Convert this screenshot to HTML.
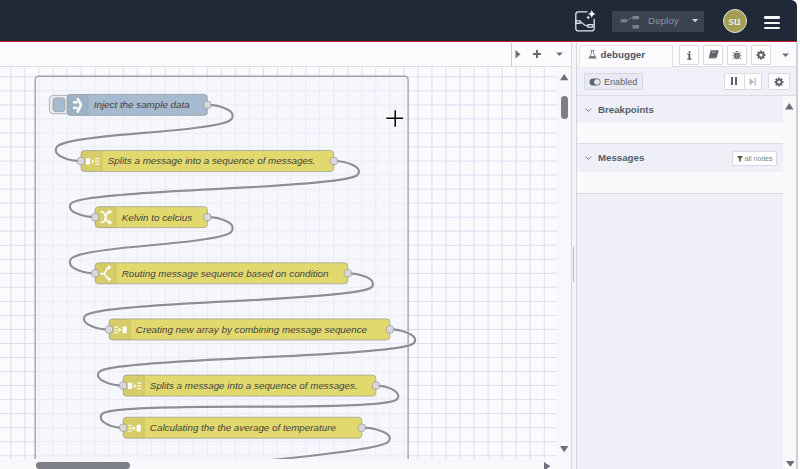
<!DOCTYPE html>
<html><head><meta charset="utf-8">
<style>
*{box-sizing:border-box;margin:0;padding:0}
html,body{width:800px;height:469px;overflow:hidden;background:#fff;font-family:"Liberation Sans",sans-serif;position:relative}
.a{position:absolute}
#hdr{left:0;top:0;width:797px;height:42.5px;background:#1f2937;border-bottom:1.5px solid #cc1b31;border-top-right-radius:6px}
#hdr{height:42px}
#tabbar{left:0;top:43.3px;width:571px;height:23.7px;background:#fcfcfe;border-bottom:1.4px solid #dcdce3}
#canvas{left:0;top:67px;width:557px;height:391.8px;background:#fbfbfe;overflow:hidden}
#vscroll{left:557px;top:67px;width:14px;height:391.8px;background:#f8f8fb}
#hscroll{left:0;top:458.8px;width:557px;height:11px;background:#f8f8fb}
#sep{left:570.5px;top:42.5px;width:7px;height:427px;background:#f3f3f8;border-left:1.3px solid #d6d6de;border-right:1.3px solid #d6d6de}
#side{left:577px;top:42.5px;width:219px;height:427px;background:#efeff8}
.lo{fill:none;stroke:#fff;stroke-width:5;stroke-opacity:.5}
.ln{fill:none;stroke:#8d8f96;stroke-width:3.1}
.port{fill:#d9d9d9;stroke:#999;stroke-width:1}
.lbl{font-family:"Liberation Sans",sans-serif;font-size:14px;font-style:italic;fill:#424242}
.btn{position:absolute;background:#fff;border:1px solid #d9d9e0;border-radius:2px}
</style></head><body>
<div id="hdr" class="a">
  <svg class="a" style="left:573px;top:9px" width="24" height="24" viewBox="0 0 24 24">
    <g fill="none" stroke="#e5e7eb" stroke-width="1.3" stroke-linecap="round">
      <path d="M14 2.8 H5.3 A2.5 2.5 0 0 0 2.8 5.3 V19.4 A2.5 2.5 0 0 0 5.3 21.9 H18.7 A2.5 2.5 0 0 0 21.2 19.4 V10.2"/>
      <path d="M7.3 13 C9.5 13 10 16.8 14.7 16.8"/>
      <rect x="3" y="11.9" width="4.3" height="2.4" rx="0.6"/>
      <rect x="14.7" y="15.7" width="5.2" height="2.4" rx="0.6"/>
    </g>
    <g fill="#f3f4f6">
    <path d="M18.8 0.8 Q19.4 4.4 22.8 5 Q19.4 5.6 18.8 9.2 Q18.2 5.6 14.8 5 Q18.2 4.4 18.8 0.8Z"/>
    <path d="M15.2 6.6 Q15.5 8.2 17.1 8.5 Q15.5 8.8 15.2 10.4 Q14.9 8.8 13.3 8.5 Q14.9 8.2 15.2 6.6Z"/></g>
  </svg>
  <div class="a" style="left:612px;top:11px;width:91.5px;height:21px;background:#3b4350;border-radius:1px">
    <svg class="a" style="left:8px;top:4px" width="20" height="14" viewBox="0 0 20 14">
      <g fill="#7d828c"><rect x="0.6" y="4.2" width="6.3" height="3.2"/><rect x="12.5" y="1" width="6.5" height="3.2"/><rect x="12.5" y="10" width="6.5" height="3.5"/></g>
      <path d="M6.5 5.8 C9 5.8 9.5 2.6 12.5 2.6" fill="none" stroke="#7d828c" stroke-width="0.9"/>
    </svg>
    <div class="a" style="left:36px;top:3.4px;font-size:9.9px;color:#8b919b;line-height:14px">Deploy</div>
    <svg class="a" style="left:79.9px;top:8.4px" width="7" height="4" viewBox="0 0 7 4"><path d="M0 0 H6.2 L3.1 3.3Z" fill="#d1d5db"/></svg>
  </div>
  <div class="a" style="left:722.5px;top:9px;width:24px;height:24px;border-radius:50%;background:#a39d55;border:1px solid #e8e6cf"></div>
  <div class="a" style="left:722.5px;top:9px;width:24px;height:24px;text-align:center;font-family:'Liberation Serif',serif;font-size:13.5px;line-height:24px;color:#fff">su</div>
  <div class="a" style="left:764px;top:16.3px;width:16px;height:2.4px;background:#f3f4f6;border-radius:1px"></div>
  <div class="a" style="left:764px;top:21.6px;width:16px;height:2.4px;background:#f3f4f6;border-radius:1px"></div>
  <div class="a" style="left:764px;top:26.8px;width:16px;height:2.4px;background:#f3f4f6;border-radius:1px"></div>
</div>
<div id="tabbar" class="a">
  <div class="a" style="left:511px;top:0;width:1.2px;height:23px;background:#c9c9d1"></div>
  <svg class="a" style="left:515px;top:6.9px" width="7" height="9" viewBox="0 0 7 9"><path d="M0.5 0 L5.5 4.2 L0.5 8.4Z" fill="#6c6f78"/></svg>
  <div class="a" style="left:533px;top:10.1px;width:8px;height:1.8px;background:#676a72"></div>
  <div class="a" style="left:536.1px;top:7px;width:1.8px;height:8px;background:#676a72"></div>
  <svg class="a" style="left:556px;top:9.2px" width="7" height="5" viewBox="0 0 7 5"><path d="M0 0.5 H7 L3.5 4Z" fill="#6c6f78"/></svg>
</div>
<div id="canvas" class="a">
  <svg class="a" style="left:0;top:0" width="557" height="393">
    <g stroke="#dcddef" stroke-width="1" fill="none"><path d="M-17.17 0 V400"/><path d="M-3.14 0 V400"/><path d="M10.90 0 V400"/><path d="M24.94 0 V400"/><path d="M38.97 0 V400"/><path d="M53.01 0 V400"/><path d="M67.04 0 V400"/><path d="M81.08 0 V400"/><path d="M95.12 0 V400"/><path d="M109.15 0 V400"/><path d="M123.19 0 V400"/><path d="M137.22 0 V400"/><path d="M151.26 0 V400"/><path d="M165.30 0 V400"/><path d="M179.33 0 V400"/><path d="M193.37 0 V400"/><path d="M207.40 0 V400"/><path d="M221.44 0 V400"/><path d="M235.48 0 V400"/><path d="M249.51 0 V400"/><path d="M263.55 0 V400"/><path d="M277.58 0 V400"/><path d="M291.62 0 V400"/><path d="M305.66 0 V400"/><path d="M319.69 0 V400"/><path d="M333.73 0 V400"/><path d="M347.76 0 V400"/><path d="M361.80 0 V400"/><path d="M375.84 0 V400"/><path d="M389.87 0 V400"/><path d="M403.91 0 V400"/><path d="M417.94 0 V400"/><path d="M431.98 0 V400"/><path d="M446.02 0 V400"/><path d="M460.05 0 V400"/><path d="M474.09 0 V400"/><path d="M488.12 0 V400"/><path d="M502.16 0 V400"/><path d="M516.20 0 V400"/><path d="M530.23 0 V400"/><path d="M544.27 0 V400"/><path d="M558.30 0 V400"/><path d="M572.34 0 V400"/><path d="M586.38 0 V400"/><path d="M600.41 0 V400"/><path d="M614.45 0 V400"/><path d="M628.48 0 V400"/><path d="M0 -18.27 H560"/><path d="M0 -4.24 H560"/><path d="M0 9.80 H560"/><path d="M0 23.84 H560"/><path d="M0 37.87 H560"/><path d="M0 51.91 H560"/><path d="M0 65.94 H560"/><path d="M0 79.98 H560"/><path d="M0 94.02 H560"/><path d="M0 108.05 H560"/><path d="M0 122.09 H560"/><path d="M0 136.12 H560"/><path d="M0 150.16 H560"/><path d="M0 164.20 H560"/><path d="M0 178.23 H560"/><path d="M0 192.27 H560"/><path d="M0 206.30 H560"/><path d="M0 220.34 H560"/><path d="M0 234.38 H560"/><path d="M0 248.41 H560"/><path d="M0 262.45 H560"/><path d="M0 276.48 H560"/><path d="M0 290.52 H560"/><path d="M0 304.56 H560"/><path d="M0 318.59 H560"/><path d="M0 332.63 H560"/><path d="M0 346.66 H560"/><path d="M0 360.70 H560"/><path d="M0 374.74 H560"/><path d="M0 388.77 H560"/><path d="M0 402.81 H560"/><path d="M0 416.84 H560"/></g>
    <g transform="translate(10.9,9.8) scale(0.7018)">
      <rect x="34.6" y="-0.8" width="531.4" height="600" rx="5" ry="5" fill="#f4f5fa" fill-opacity="0.6" stroke="#a2a4ad" stroke-width="2"/>
      <path class="lo" d="M 280 40 C 298 40 316 47.5 316 55 S 316 70 190 80 S 64 97.5 64 105 S 82 120 100 120"/><path class="ln" d="M 280 40 C 298 40 316 47.5 316 55 S 316 70 190 80 S 64 97.5 64 105 S 82 120 100 120"/><path class="lo" d="M 460 120 C 478 120 496 127.5 496 135 S 496 150 290 160 S 84 177.5 84 185 S 102 200 120 200"/><path class="ln" d="M 460 120 C 478 120 496 127.5 496 135 S 496 150 290 160 S 84 177.5 84 185 S 102 200 120 200"/><path class="lo" d="M 280 200 C 298 200 316 207.5 316 215 S 316 230 200 240 S 84 257.5 84 265 S 102 280 120 280"/><path class="ln" d="M 280 200 C 298 200 316 207.5 316 215 S 316 230 200 240 S 84 257.5 84 265 S 102 280 120 280"/><path class="lo" d="M 480 280 C 498 280 516 287.5 516 295 S 516 310 310 320 S 104 337.5 104 345 S 122 360 140 360"/><path class="ln" d="M 480 280 C 498 280 516 287.5 516 295 S 516 310 310 320 S 104 337.5 104 345 S 122 360 140 360"/><path class="lo" d="M 540 360 C 558 360 576 367.5 576 375 S 576 390 350 400 S 124 417.5 124 425 S 142 440 160 440"/><path class="ln" d="M 540 360 C 558 360 576 367.5 576 375 S 576 390 350 400 S 124 417.5 124 425 S 142 440 160 440"/><path class="lo" d="M 520 440 C 536 440 552 447.5 552 455 S 552 470 340 470 S 128 477.5 128 485 S 144 500 160 500"/><path class="ln" d="M 520 440 C 536 440 552 447.5 552 455 S 552 470 340 470 S 128 477.5 128 485 S 144 500 160 500"/><path class="lo" d="M 500 500 C 520 500 540 507.5 540 515 S 540 530 330 550 S 120 577.5 120 585 S 140 600 160 600"/><path class="ln" d="M 500 500 C 520 500 540 507.5 540 515 S 540 530 330 550 S 120 577.5 120 585 S 140 600 160 600"/>
      <g transform="translate(80,25)"><rect x="-25" y="1.5" width="32" height="26" rx="5" ry="5" fill="#ebebf3" stroke="#999" stroke-width="1"/><rect x="-20" y="5" width="17" height="19.5" rx="4" ry="4" fill="#a6bbcf" stroke="#999" stroke-width="1"/><rect x="0" y="0" width="200" height="30" rx="5" ry="5" fill="#a6bbcf" stroke="#999" stroke-width="1"/><path d="M5 0 H30 V30 H5 A5 5 0 0 1 0 25 V5 A5 5 0 0 1 5 0Z" fill="#000" fill-opacity="0.05"/><path d="M30 1 l0 28" stroke="#000" stroke-opacity="0.1" stroke-width="1"/><g fill="#fff"><rect x="8.6" y="9.6" width="6.5" height="3.4"/><rect x="8.6" y="17.8" width="6.5" height="3.2"/></g><path d="M14.5 5.5 L20 15 L14.5 26" fill="none" stroke="#fff" stroke-width="3.4" stroke-linejoin="miter"/><text x="38" y="15" dy=".35em" class="lbl">Inject the sample data</text><rect x="195" y="10" width="10" height="10" rx="3" ry="3" class="port"/></g><g transform="translate(100,105)"><rect x="0" y="0" width="360" height="30" rx="5" ry="5" fill="#e2d96e" stroke="#999" stroke-width="1"/><path d="M5 0 H30 V30 H5 A5 5 0 0 1 0 25 V5 A5 5 0 0 1 5 0Z" fill="#000" fill-opacity="0.05"/><path d="M30 1 l0 28" stroke="#000" stroke-opacity="0.1" stroke-width="1"/><g fill="#fff"><rect x="6.8" y="11" width="6" height="9" rx="0.8"/><path d="M15.6 12.6 L18.6 15.6 L15.6 18.8Z"/></g><g fill="#fff" fill-opacity="0.85"><rect x="20" y="10.6" width="6" height="1.9"/><rect x="20" y="14.4" width="6" height="1.9"/><rect x="20" y="18.5" width="6" height="1.9"/></g><text x="38" y="15" dy=".35em" class="lbl">Splits a message into a sequence of messages.</text><rect x="-5" y="10" width="10" height="10" rx="3" ry="3" class="port"/><rect x="355" y="10" width="10" height="10" rx="3" ry="3" class="port"/></g><g transform="translate(120,185)"><rect x="0" y="0" width="160" height="30" rx="5" ry="5" fill="#e2d96e" stroke="#999" stroke-width="1"/><path d="M5 0 H30 V30 H5 A5 5 0 0 1 0 25 V5 A5 5 0 0 1 5 0Z" fill="#000" fill-opacity="0.05"/><path d="M30 1 l0 28" stroke="#000" stroke-opacity="0.1" stroke-width="1"/><g fill="none" stroke="#fff" stroke-width="2.3"><path d="M8 7.5 H10.5 C15 7.5 15 22.5 19.5 22.5 H21"/><path d="M8 22.5 H10.5 C15 22.5 15 7.5 19.5 7.5 H21"/></g><g fill="#fff"><path d="M19.5 3.8 L24.5 7.5 L19.5 11.2Z"/><path d="M19.5 18.8 L24.5 22.5 L19.5 26.2Z"/></g><text x="38" y="15" dy=".35em" class="lbl">Kelvin to celcius</text><rect x="-5" y="10" width="10" height="10" rx="3" ry="3" class="port"/><rect x="155" y="10" width="10" height="10" rx="3" ry="3" class="port"/></g><g transform="translate(120,265)"><rect x="0" y="0" width="360" height="30" rx="5" ry="5" fill="#e2d96e" stroke="#999" stroke-width="1"/><path d="M5 0 H30 V30 H5 A5 5 0 0 1 0 25 V5 A5 5 0 0 1 5 0Z" fill="#000" fill-opacity="0.05"/><path d="M30 1 l0 28" stroke="#000" stroke-opacity="0.1" stroke-width="1"/><g fill="none" stroke="#fff" stroke-width="2.3"><path d="M7.5 15.5 H12 C15.5 15.5 15.5 6.5 19.5 6.5 H20"/><path d="M12 15.5 C15.5 15.5 15.5 23.5 19.5 23.5 H20"/></g><g fill="#fff"><path d="M18.5 2.8 L23.5 6.5 L18.5 10.2Z"/><path d="M18.5 19.8 L23.5 23.5 L18.5 27.2Z"/></g><text x="38" y="15" dy=".35em" class="lbl">Routing message sequence based on condition</text><rect x="-5" y="10" width="10" height="10" rx="3" ry="3" class="port"/><rect x="355" y="10" width="10" height="10" rx="3" ry="3" class="port"/></g><g transform="translate(140,345)"><rect x="0" y="0" width="400" height="30" rx="5" ry="5" fill="#e2d96e" stroke="#999" stroke-width="1"/><path d="M5 0 H30 V30 H5 A5 5 0 0 1 0 25 V5 A5 5 0 0 1 5 0Z" fill="#000" fill-opacity="0.05"/><path d="M30 1 l0 28" stroke="#000" stroke-opacity="0.1" stroke-width="1"/><g fill="#fff" fill-opacity="0.85"><rect x="7.2" y="10.8" width="5.2" height="1.9"/><rect x="7.2" y="14.8" width="5.2" height="1.9"/><rect x="7.2" y="18.8" width="5.2" height="1.9"/></g><g fill="#fff"><path d="M13.6 12.4 L17.8 15.7 L13.6 19Z"/><rect x="19.2" y="10.7" width="5.8" height="9.7" rx="0.8"/></g><text x="38" y="15" dy=".35em" class="lbl">Creating new array by combining message sequence</text><rect x="-5" y="10" width="10" height="10" rx="3" ry="3" class="port"/><rect x="395" y="10" width="10" height="10" rx="3" ry="3" class="port"/></g><g transform="translate(160,425)"><rect x="0" y="0" width="360" height="30" rx="5" ry="5" fill="#e2d96e" stroke="#999" stroke-width="1"/><path d="M5 0 H30 V30 H5 A5 5 0 0 1 0 25 V5 A5 5 0 0 1 5 0Z" fill="#000" fill-opacity="0.05"/><path d="M30 1 l0 28" stroke="#000" stroke-opacity="0.1" stroke-width="1"/><g fill="#fff"><rect x="6.8" y="11" width="6" height="9" rx="0.8"/><path d="M15.6 12.6 L18.6 15.6 L15.6 18.8Z"/></g><g fill="#fff" fill-opacity="0.85"><rect x="20" y="10.6" width="6" height="1.9"/><rect x="20" y="14.4" width="6" height="1.9"/><rect x="20" y="18.5" width="6" height="1.9"/></g><text x="38" y="15" dy=".35em" class="lbl">Splits a message into a sequence of messages.</text><rect x="-5" y="10" width="10" height="10" rx="3" ry="3" class="port"/><rect x="355" y="10" width="10" height="10" rx="3" ry="3" class="port"/></g><g transform="translate(160,485)"><rect x="0" y="0" width="340" height="30" rx="5" ry="5" fill="#e2d96e" stroke="#999" stroke-width="1"/><path d="M5 0 H30 V30 H5 A5 5 0 0 1 0 25 V5 A5 5 0 0 1 5 0Z" fill="#000" fill-opacity="0.05"/><path d="M30 1 l0 28" stroke="#000" stroke-opacity="0.1" stroke-width="1"/><g fill="#fff" fill-opacity="0.85"><rect x="7.2" y="10.8" width="5.2" height="1.9"/><rect x="7.2" y="14.8" width="5.2" height="1.9"/><rect x="7.2" y="18.8" width="5.2" height="1.9"/></g><g fill="#fff"><path d="M13.6 12.4 L17.8 15.7 L13.6 19Z"/><rect x="19.2" y="10.7" width="5.8" height="9.7" rx="0.8"/></g><text x="38" y="15" dy=".35em" class="lbl">Calculating the the average of temperature</text><rect x="-5" y="10" width="10" height="10" rx="3" ry="3" class="port"/><rect x="335" y="10" width="10" height="10" rx="3" ry="3" class="port"/></g>
    </g>
  </svg>
</div>
<div id="vscroll" class="a">
  <svg class="a" style="left:2.8px;top:7.4px" width="9" height="7" viewBox="0 0 9 7"><path d="M0 6.3 L4.2 0 L8.4 6.3Z" fill="#6c6f78"/></svg>
  <div class="a" style="left:3.5px;top:28.7px;width:7.2px;height:23.3px;background:#7d7f88;border-radius:4px"></div>
  <svg class="a" style="left:2.8px;top:378.9px" width="9" height="7" viewBox="0 0 9 7"><path d="M0 0 L8.4 0 L4.2 6.3Z" fill="#6c6f78"/></svg>
</div>
<div id="hscroll" class="a">
  <div class="a" style="left:35.6px;top:3px;width:94.4px;height:7px;background:#7d7f88;border-radius:4px"></div>
  <svg class="a" style="left:543.5px;top:3px" width="7" height="9" viewBox="0 0 7 9"><path d="M0 0 L6.3 4.2 L0 8.4Z" fill="#6c6f78"/></svg>
</div>
<div class="a" style="left:557px;top:458.8px;width:14px;height:11px;background:#f8f8fb"></div>
<div id="sep" class="a">
  <div class="a" style="left:1.2px;top:204.5px;width:1.6px;height:34.5px;background:#b9bac2"></div>
</div>
<div id="side" class="a">
  <div class="a" style="left:0;top:0;width:219px;height:24.8px;background:#fcfcfe;border-bottom:1px solid #dcdce3"></div>
  <div class="a" style="left:2px;top:2.8px;width:93.7px;height:22.8px;background:#fcfcfe;border:1px solid #dfdfe6;border-bottom:none;border-radius:2px 2px 0 0"></div>
  <svg class="a" style="left:11px;top:7.6px" width="9" height="9" viewBox="0 0 9 9"><path d="M2.6 0.6 H6.4 M3.5 0.6 V3.4 L0.9 8.2 H8.1 L5.5 3.4 V0.6" fill="none" stroke="#7a7d84" stroke-width="0.9" stroke-linejoin="round"/><path d="M2.1 6 H6.9 L7.8 8 H1.2Z" fill="#7a7d84"/></svg>
  <div class="a" style="left:23.5px;top:6.5px;font-size:9.8px;font-weight:bold;color:#4f5560;line-height:12px">debugger</div>
  <div class="btn" style="left:102.4px;top:2.75px;width:19.5px;height:19.3px;border-radius:1px"></div>
  <div class="btn" style="left:126.3px;top:2.75px;width:19.5px;height:19.3px;border-radius:1px"></div>
  <div class="btn" style="left:150.2px;top:2.75px;width:19.5px;height:19.3px;border-radius:1px"></div>
  <div class="btn" style="left:174.3px;top:2.75px;width:19.5px;height:19.3px;border-radius:1px"></div>
  <svg class="a" style="left:110px;top:8px" width="5" height="9" viewBox="0 0 5 9"><circle cx="2.6" cy="0.9" r="0.95" fill="#555"/><path d="M0.3 2.6 H3.3 V7.6 H4.4 V8.8 H0.3 V7.6 H1.5 V3.8 H0.3Z" fill="#555"/></svg>
  <svg class="a" style="left:130.5px;top:7.8px" width="11" height="10" viewBox="0 0 11 10"><path d="M3.2 0.3 H10 Q10.6 0.3 10.5 1 L8.9 7.6 Q8.7 8.4 8 8.4 H1.6 Q0.6 8.4 0.8 7.4 L2.4 1 Q2.6 0.3 3.2 0.3Z" fill="#5f636b"/><path d="M1.4 8.2 H8.2 L8.6 6.8" fill="none" stroke="#d8dae0" stroke-width="0.7"/><rect x="4.2" y="1.6" width="4" height="1.4" fill="#9a9da5" transform="skewX(-12)"/></svg>
  <svg class="a" style="left:155px;top:7.6px" width="10" height="10" viewBox="0 0 10 10"><g fill="#5f636b"><path d="M3 2.2 Q5 -0.2 7 2.2Z"/><path d="M2.3 3 H7.7 V6.5 Q7.7 9.2 5 9.2 Q2.3 9.2 2.3 6.5Z"/></g><path d="M5 3.4 V8.8" stroke="#c8cad0" stroke-width="0.6"/><g stroke="#5f636b" stroke-width="0.8" fill="none"><path d="M0.6 2.4 L2.4 3.6 M9.4 2.4 L7.6 3.6 M0.3 5.8 H2.3 M9.7 5.8 H7.7 M0.7 9.2 L2.5 7.8 M9.3 9.2 L7.5 7.8"/></g></svg>
  <svg class="a" style="left:179.2px;top:7.9px" width="10" height="10" viewBox="0 0 10 10"><path d="M8.27 4.08 L9.49 4.00 L9.49 6.00 L8.27 5.92 L7.97 6.66 L8.88 7.46 L7.46 8.88 L6.66 7.97 L5.92 8.27 L6.00 9.49 L4.00 9.49 L4.08 8.27 L3.34 7.97 L2.54 8.88 L1.12 7.46 L2.03 6.66 L1.73 5.92 L0.51 6.00 L0.51 4.00 L1.73 4.08 L2.03 3.34 L1.12 2.54 L2.54 1.12 L3.34 2.03 L4.08 1.73 L4.00 0.51 L6.00 0.51 L5.92 1.73 L6.66 2.03 L7.46 1.12 L8.88 2.54 L7.97 3.34Z M5 3.4 A1.6 1.6 0 1 0 5 6.6 A1.6 1.6 0 1 0 5 3.4Z" fill="#5f636b" fill-rule="evenodd"/></svg>
  <svg class="a" style="left:204.5px;top:10.5px" width="7" height="5" viewBox="0 0 7 5"><path d="M0 0.5 H7 L3.5 4Z" fill="#6c6f78"/></svg>
  <!-- toolbar -->
  <div class="a" style="left:0;top:24.8px;width:219px;height:29px;background:#f0f0f8;border-bottom:1px solid #dcdce4"></div>
  <div class="a" style="left:6.6px;top:30.5px;width:59.2px;height:16.6px;background:#e9e9f2;border:1px solid #d6d6de;border-radius:1px"></div>
  <svg class="a" style="left:12px;top:35px" width="12" height="8" viewBox="0 0 12 8"><rect x="0.5" y="0.5" width="11" height="7" rx="3.5" fill="#5f6670"/><circle cx="8" cy="4" r="2.8" fill="#e9e9f2"/></svg>
  <div class="a" style="left:27px;top:33.3px;font-size:9.1px;color:#5a6270;line-height:12px">Enabled</div>
  <div class="btn" style="left:146.5px;top:30.8px;width:21px;height:16.5px;border-radius:1px 0 0 1px"></div>
  <div class="btn" style="left:166.5px;top:30.8px;width:18px;height:16.5px;border-radius:0 1px 1px 0"></div>
  <div class="a" style="left:153.5px;top:34.8px;width:2.6px;height:8px;background:#606068"></div>
  <div class="a" style="left:157.8px;top:34.8px;width:2.6px;height:8px;background:#606068"></div>
  <svg class="a" style="left:172px;top:35.5px" width="8" height="8" viewBox="0 0 8 8"><path d="M0.5 0 L5 3.7 L0.5 7.5Z" fill="#b5b5bd"/><rect x="5.5" y="0" width="1.3" height="7.5" fill="#b5b5bd"/></svg>
  <div class="btn" style="left:191.2px;top:30.8px;width:21.4px;height:16.5px;border-radius:1px"></div>
  <svg class="a" style="left:197.2px;top:34.2px" width="10" height="10" viewBox="0 0 10 10"><path d="M8.27 4.08 L9.49 4.00 L9.49 6.00 L8.27 5.92 L7.97 6.66 L8.88 7.46 L7.46 8.88 L6.66 7.97 L5.92 8.27 L6.00 9.49 L4.00 9.49 L4.08 8.27 L3.34 7.97 L2.54 8.88 L1.12 7.46 L2.03 6.66 L1.73 5.92 L0.51 6.00 L0.51 4.00 L1.73 4.08 L2.03 3.34 L1.12 2.54 L2.54 1.12 L3.34 2.03 L4.08 1.73 L4.00 0.51 L6.00 0.51 L5.92 1.73 L6.66 2.03 L7.46 1.12 L8.88 2.54 L7.97 3.34Z M5 3.4 A1.6 1.6 0 1 0 5 6.6 A1.6 1.6 0 1 0 5 3.4Z" fill="#5f636b" fill-rule="evenodd"/></svg>
  <!-- sections -->
  <div class="a" style="left:0;top:53.8px;width:206px;height:26.4px;background:#eeeff7"></div>
  <div class="a" style="left:0;top:80.2px;width:206px;height:21.5px;background:#fafafd;border-bottom:1px solid #dcdce4"></div>
  <svg class="a" style="left:7.8px;top:65.5px" width="7" height="5" viewBox="0 0 7 5"><path d="M0.6 0.6 L3.4 3.4 L6.2 0.6" fill="none" stroke="#777" stroke-width="1"/></svg>
  <div class="a" style="left:21px;top:61px;font-size:9.7px;font-weight:bold;color:#555e6b;line-height:12px">Breakpoints</div>
  <div class="a" style="left:0;top:102px;width:206px;height:27.5px;background:#eeeff7"></div>
  <div class="a" style="left:0;top:129.5px;width:206px;height:21.5px;background:#fafafd;border-bottom:1px solid #dcdce4"></div>
  <svg class="a" style="left:7.8px;top:113.5px" width="7" height="5" viewBox="0 0 7 5"><path d="M0.6 0.6 L3.4 3.4 L6.2 0.6" fill="none" stroke="#777" stroke-width="1"/></svg>
  <div class="a" style="left:21px;top:109px;font-size:9.7px;font-weight:bold;color:#555e6b;line-height:12px">Messages</div>
  <div class="btn" style="left:155.2px;top:108.7px;width:44.6px;height:14.4px;border-radius:1px"></div>
  <svg class="a" style="left:160px;top:113px" width="6" height="6" viewBox="0 0 6 6"><path d="M0 0 H6 L3.8 2.8 V6 L2.2 5 V2.8Z" fill="#555"/></svg>
  <div class="a" style="left:167.6px;top:111.3px;font-size:7px;color:#7a7f88;line-height:9px">all nodes</div>
  <!-- scrollbar -->
  <div class="a" style="left:206px;top:53.8px;width:13px;height:374px;background:#f8f8fb"></div>
  <svg class="a" style="left:208.4px;top:60.8px" width="9" height="7" viewBox="0 0 9 7"><path d="M0 6.4 L4.3 0 L8.6 6.4Z" fill="#6c6f78"/></svg>
  <svg class="a" style="left:208.6px;top:418px" width="9" height="7" viewBox="0 0 9 7"><path d="M0 0 L8.6 0 L4.3 5.7Z" fill="#6c6f78"/></svg>
</div>
<div class="a" style="left:796px;top:42.5px;width:1.5px;height:427px;background:#cfd0d8"></div>
<div class="a" style="left:576.2px;top:42.5px;width:1.2px;height:427px;background:#d3d3db"></div>
<svg class="a" style="left:383px;top:107px" width="24" height="23" viewBox="383 107 24 23">
  <g stroke="#fff" stroke-width="3.6" stroke-linecap="round" fill="none"><path d="M386.6 118.3 H402.9 M395.2 110.6 V126.3"/></g>
  <g stroke="#000" stroke-width="1.5" fill="none"><path d="M386.3 118.3 H403.2 M395.2 110.2 V126.7"/></g>
</svg>
</body></html>
